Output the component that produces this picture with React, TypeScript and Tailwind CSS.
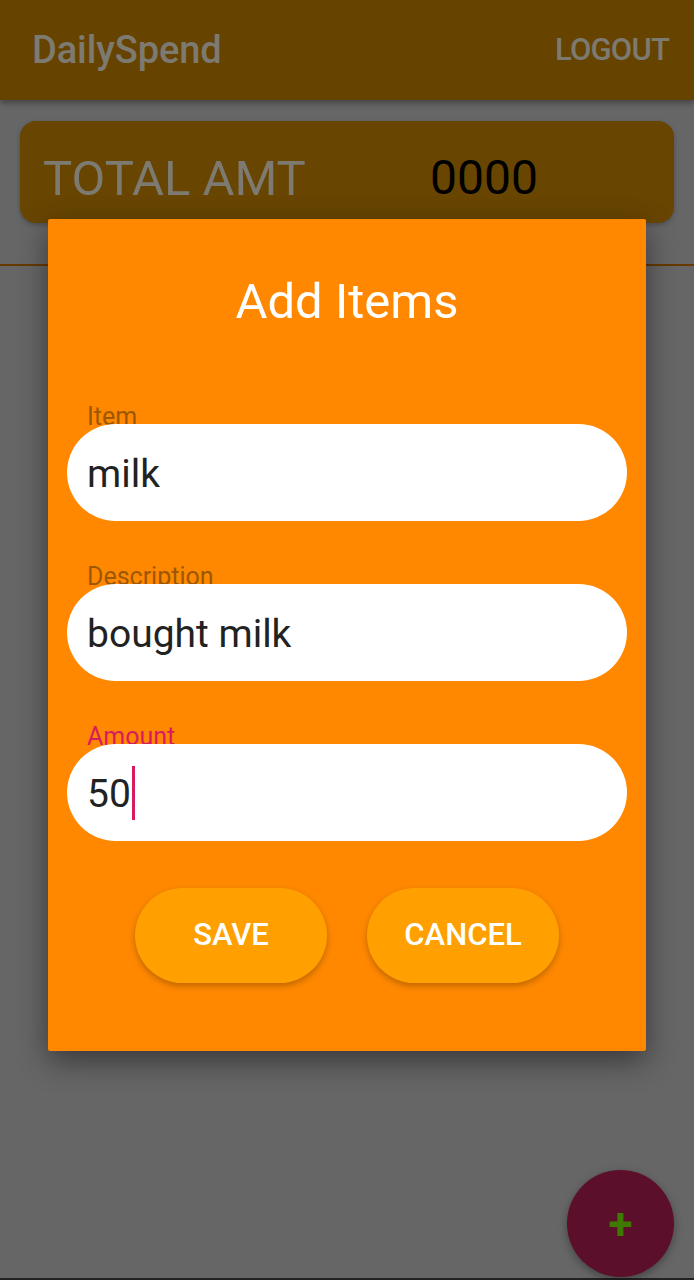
import React from 'react';

const Field: React.FC<{ label: string; value: string; active?: boolean }> = ({ label, value, active }) => (
  <div className="flex flex-col">
    <span
      className={`ml-[39px] text-[25px] leading-[26px] -mb-[6px] ${active ? 'text-[#d81b60]' : 'text-[#9c5800]'}`}
    >
      {label}
    </span>
    <div className="mx-[19px] h-[97px] rounded-full bg-white flex items-center px-[20px] pt-[3px]">
      <span className="text-[39px] text-[#222] leading-none">{value}</span>
      {active && <span className="ml-[1px] -mt-[3px] w-[3px] h-[54px] bg-[#d81b60]" />}
    </div>
  </div>
);

export default function App() {
  return (
    <div
      className="relative w-[694px] h-[1280px] overflow-hidden bg-[#666666] flex flex-col"
      style={{ fontFamily: 'Roboto, "Liberation Sans", sans-serif' }}
    >
      {/* App bar */}
      <div className="h-[100px] bg-[#664400] flex items-center justify-between pl-[32px] pr-[25px] shadow-[0_3px_6px_rgba(0,0,0,0.35)] z-10">
        <span className="text-[38px] font-medium text-[#7d7a72] tracking-[-0.1px]">DailySpend</span>
        <span className="text-[31px] font-medium text-[#7d7a72] tracking-[-0.8px]">LOGOUT</span>
      </div>

      {/* Total card */}
      <div className="mx-[20px] mt-[21px] h-[102px] rounded-[16px] bg-[#684500] flex items-center pl-[23px] pt-[12px] shadow-[0_2px_5px_rgba(0,0,0,0.25)]">
        <span className="w-[387px] text-[49px] text-[#7d7a72] leading-none">TOTAL AMT</span>
        <span className="text-[48px] text-black leading-none">0000</span>
      </div>

      <div className="mt-[41px] h-[2px] bg-[#663a00]" />

      <div className="flex-1" />
      <div className="h-[2px] bg-[#222]" />

      {/* FAB */}
      <div className="absolute left-[567px] top-[1170px] w-[107px] h-[107px] rounded-full bg-[#5c0f2a] flex items-center justify-center shadow-[0_3px_8px_rgba(0,0,0,0.35)]">
        <span className="text-[44px] font-bold text-[#3f7a00] leading-none">+</span>
      </div>

      {/* Dialog */}
      <div className="absolute left-[48px] top-[219px] w-[598px] h-[832px] bg-[#ff8800] rounded-[2px] shadow-[0_10px_30px_rgba(0,0,0,0.45)] flex flex-col">
        <div className="pt-[55px] text-center text-white text-[49px] leading-[56px]">Add Items</div>
        <div className="mt-[74px] flex flex-col gap-[43px]">
          <Field label="Item" value="milk" />
          <Field label="Description" value="bought milk" />
          <Field label="Amount" value="50" active />
        </div>
        <div className="mt-[47px] flex justify-center gap-[40px]">
          <button className="w-[192px] h-[95px] rounded-full bg-[#ffa000] text-white text-[31px] font-medium shadow-[0_3px_6px_rgba(0,0,0,0.25)]">
            SAVE
          </button>
          <button className="w-[192px] h-[95px] rounded-full bg-[#ffa000] text-white text-[31px] font-medium shadow-[0_3px_6px_rgba(0,0,0,0.25)]">
            CANCEL
          </button>
        </div>
      </div>
    </div>
  );
}
